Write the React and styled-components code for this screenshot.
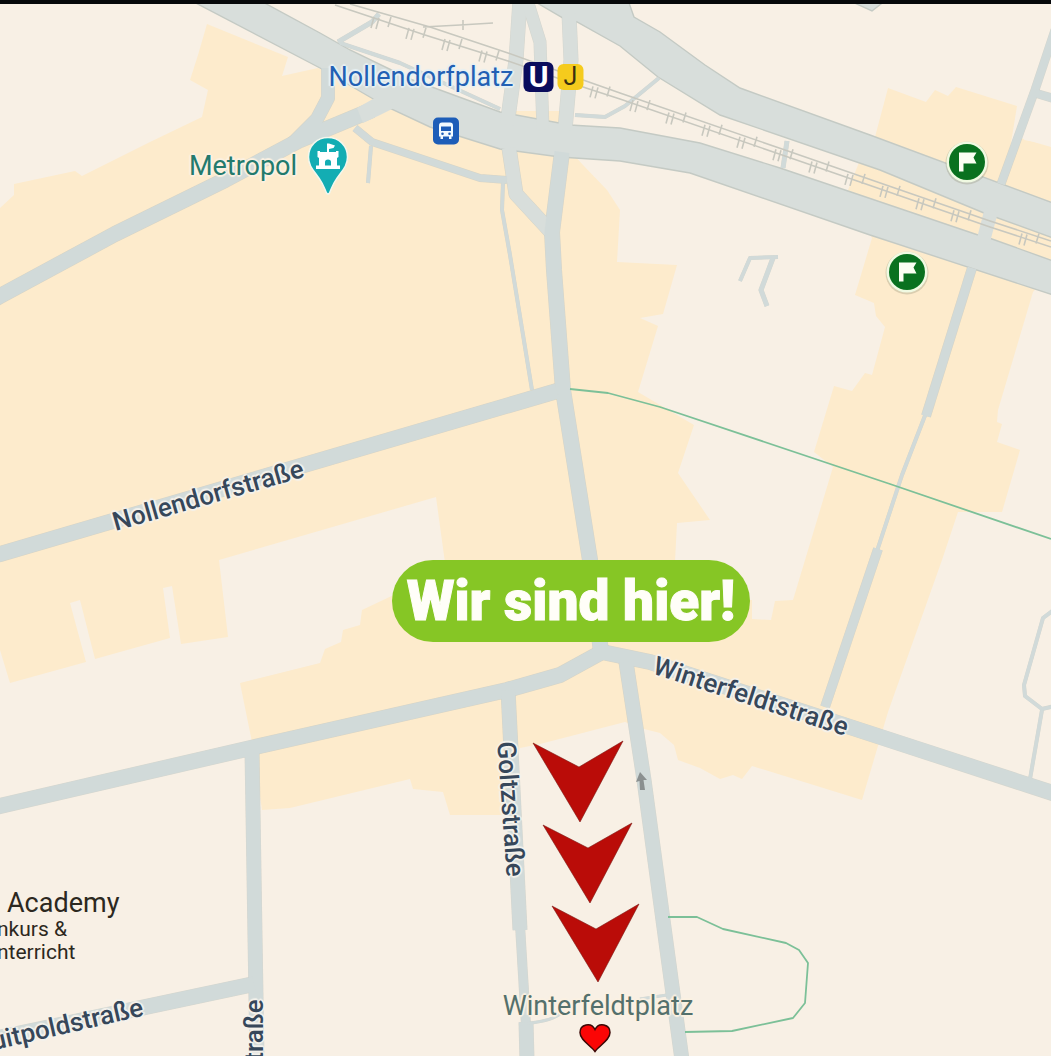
import React from "react";
import styled, { createGlobalStyle } from "styled-components";

const MAP_W = 1051;
const MAP_H = 1052;
const MAP_TOP = 4;

const color = {
  land: "#f8f0e5",
  district: "#fdebcc",
  road: "#d1dad9",
  avenue: "#d8dedb",
  casing: "#c4cac4",
  rail: "#c8c8bf",
  trail: "#7cc098",
  arrow: "#ba0c08",
  ink: "#36475a",
};

const GlobalStyle = createGlobalStyle`
  *, *::before, *::after { box-sizing: border-box; }
  body { margin: 0; background: ${color.land}; }
`;

const Page = styled.main`
  border-top: 4px solid #06080a;
  overflow: hidden;
  font-family: Roboto, "Liberation Sans", sans-serif;
`;

const MapCanvas = styled.section`
  position: relative;
  width: 100%;
  aspect-ratio: ${MAP_W} / ${MAP_H};
  overflow: hidden;
  background: ${color.land};
`;

const Drawing = styled.svg`
  display: block;
  width: 100%;
  height: 100%;
`;

/* Centres its content on a map coordinate. */
const Anchor = styled.div`
  position: absolute;
  left: ${(p) => (p.$x / MAP_W) * 100}%;
  top: ${(p) => ((p.$y - MAP_TOP) / MAP_H) * 100}%;
  transform: translate(-50%, -50%) rotate(${(p) => p.$turn || 0}deg);
  display: flex;
  align-items: center;
  gap: ${(p) => p.$gap || 0}px;
  white-space: nowrap;
`;

const halo = (c) =>
  `text-shadow: 2px 0 1px ${c}, -2px 0 1px ${c}, 0 2px 1px ${c}, 0 -2px 1px ${c}, 1px 1px 1px ${c}, -1px -1px 1px ${c};`;

const StreetName = styled.span`
  font-size: 26px;
  line-height: 28px;
  font-weight: 500;
  color: ${color.ink};
  ${halo("#f4f2ec")}
`;

const PlaceName = styled.span`
  font-size: 27px;
  line-height: 32px;
  color: ${(p) => p.$color};
  ${(p) => halo(p.$halo || "#fbf1e2")}
`;

const Badges = styled.span`
  display: flex;
  align-items: center;
  gap: 4px;
`;

const LineBadge = styled.span`
  display: flex;
  align-items: center;
  justify-content: center;
  width: ${(p) => p.$size}px;
  height: ${(p) => p.$size}px;
  border-radius: 6px;
  background: ${(p) => p.$bg};
  color: ${(p) => p.$fg};
  font-size: ${(p) => p.$font}px;
  line-height: 30px;
  font-weight: ${(p) => p.$weight};
`;

const Business = styled.div`
  position: absolute;
  left: -3px;
  top: ${((888 - MAP_TOP) / MAP_H) * 100}%;
  color: #2c2820;
  font-size: 21px;
  line-height: 23px;
`;

const BusinessName = styled.div`
  padding-left: 10px;
  font-size: 27px;
  line-height: 30px;
`;

const HerePill = styled.strong`
  display: flex;
  align-items: center;
  justify-content: center;
  width: 358px;
  height: 82px;
  border-radius: 41px;
  background: #86c625;
  color: #fffef8;
  font-size: 55px;
  line-height: 64px;
  font-weight: 900;
  -webkit-text-stroke: 1px #fffef8;
`;

const Icon = styled.svg`
  display: block;
  overflow: visible;
`;

const districts = [
  "M0 208L14 195V184L75 171L82 176L120 157L150 142L202 117L208 90L190 80L198 55L207 24L288 57L282 76L318 68L400 100L560 140L583 165L607 190L620 210L617 262L677 265L663 314L640 318L658 326L638 392L694 425L678 473L710 520L677 523L673 600H752V619L771 620L775 601L793 600L833 467L814 452L834 386L852 391L865 373L872 375L885 327L876 316L874 303L855 295L872 238L848 190L860 160L875 137L888 88L926 102L935 90L948 96L956 87L1017 106L1005 180L1020 138L1051 147V270L1033 292L998 410L997 422L1002 424L997 442L1020 450L1002 512L958 512L942 560L888 712L862 800L752 766L742 779L733 775L720 779L700 768L678 760L674 745L660 733L640 728L625 722L540 744L520 748L502 815L450 815L443 792L413 789L410 779L290 808L262 810L252 742L240 683L320 663L325 649L341 642L343 630L360 625L362 610L400 592L446 570L436 497L219 560L228 637L181 644L172 586L163 588L170 638L95 659L80 600L70 603L86 662L10 683L0 650Z",
  "M512 111H562V135H512Z",
];

const clearings = [
  "M1034 103L1051 107V145L1024 140Z",
];

const avenues = [
  "M190 0L320 68L387 107L430 127L500 149L560 157L620 161L690 173L870 235L1056 296V262L992 239L978 235L780 168L700 143L620 128L570 125L500 112L410 79L350 50L320 33L259 0Z",
  "M532 0L563 18L577 22L620 46L658 77L720 115L880 170L984 213L1056 239V204L870 135L740 88L705 65L660 32L634 17L628 0Z",
  "M848 0L872 11L886 0Z",
];

const streets = [
  { d: "M520 0L516 60L507 125", w: 15, a: 1 },
  { d: "M527 0L540 42L543 130", w: 13, a: 1 },
  { d: "M569 14L571 60L565 130", w: 15, a: 1 },
  { d: "M509 148L516 194L551 232", w: 15, a: 1 },
  { d: "M562 152L552 232L554 270L563 390L590 560L601 652", w: 16 },
  { d: "M-20 560L0 554L557 391", w: 16 },
  { d: "M-20 811L0 806L255 747L507 690L560 675L602 652L650 662L850 727L1071 799", w: 16 },
  { d: "M508 690L520 930", w: 15 },
  { d: "M520 925L526 1025", w: 10 },
  { d: "M526 1022L527 1060", w: 15 },
  { d: "M626 662L644 780L682 1060", w: 15 },
  { d: "M252 750L257 1060", w: 15 },
  { d: "M-20 1042L254 984", w: 16 },
  { d: "M-20 307L0 296L115 234L225 180L300 140L372 110", w: 16 },
  { d: "M328 68V98L317 119L292 144", w: 14 },
  { d: "M355 128L372 142L480 178L507 180", w: 8 },
  { d: "M371 146L368 183", w: 4 },
  { d: "M503 182L502 210L510 255L532 390", w: 4 },
  { d: "M1055 30L1035 90L1001 184", w: 9 },
  { d: "M1035 93L1055 99", w: 9 },
  { d: "M972 268L926 416", w: 10 },
  { d: "M926 413L902 475L877 551", w: 4 },
  { d: "M878 549L825 707", w: 10 },
  { d: "M379 14L372 22L338 42", w: 5 },
  { d: "M340 43L400 63L500 109", w: 4 },
  { d: "M575 115L605 117L625 106L659 78", w: 4 },
  { d: "M787 141L783 168", w: 5 },
  { d: "M740 281L750 258L778 257", w: 4 },
  { d: "M773 258L761 290L767 306", w: 5 },
  { d: "M1055 609L1043 618L1024 685L1025 696L1042 709L1055 706", w: 4 },
  { d: "M1042 710L1030 779", w: 4 },
  { d: "M520 1024Q550 1022 560 1014M640 999L667 995", w: 3 },
];

/* Sleepers: two short ties across the lower line and one across the upper, repeated along the track. */
const railPoint = (x) => (x < 586 ? 12 + (x - 345) * 0.31 : 88 + (x - 586) * 0.343);
const tieStarts = [374, 409, 445, 482, 593, 633, 669, 705, 740, 776, 812, 848, 883, 919, 954, 1022];

function Geography() {
  return (
    <Drawing viewBox={`0 ${MAP_TOP} ${MAP_W} ${MAP_H}`} preserveAspectRatio="none" aria-hidden="true">
      {districts.map((d) => <path key={d} d={d} fill={color.district} />)}
      {clearings.map((d) => <path key={d} d={d} fill={color.land} />)}
      <g fill="none" stroke={color.casing} strokeLinejoin="round">
        {streets.map((s) => <path key={s.d} d={s.d} strokeWidth={s.w} opacity="0.7" />)}
      </g>
      <g fill={color.avenue} stroke={color.casing} strokeWidth="1.4">
        {avenues.map((d) => <path key={d} d={d} />)}
      </g>
      <g fill="none" stroke={color.road} strokeLinejoin="round">
        {streets.map((s) => (
          <path key={s.d} d={s.d} strokeWidth={s.w > 5 ? s.w - 1 : s.w - 0.5} stroke={s.a ? color.avenue : color.road} />
        ))}
      </g>
      <g fill={color.avenue}>
        <path d="M357 108L380 95L398 106L380 115L363 123Z" />
        <path d="M985 207L998 212L989 246L976 242Z" />
      </g>
      <g fill="none" stroke={color.rail} strokeWidth="1.6">
        <path d="M335 5L425 35L508 61L586 88L620 99L785 156L990 227L1051 247" />
        <path d="M350 4L430 27L508 53L586 81L620 93L785 150L990 221L1051 241" />
        <path d="M423 27L460 25L493 23M463 20V30" />
        {tieStarts.map((x) => {
          const y = railPoint(x);
          return <path key={x} d={`M${x} ${y - 4}L${x - 3} ${y + 7}M${x + 5} ${y - 3}L${x + 2} ${y + 8}M${x + 17} ${y - 4}L${x + 14} ${y + 6}`} />;
        })}
      </g>
      <g fill="none" stroke={color.trail} strokeWidth="1.8" strokeLinejoin="round">
        <path d="M570 389L608 393L660 407L890 484L1051 539" />
        <path d="M668 917H697L723 929L786 943L799 950L808 963L805 1003L793 1018L732 1031L685 1032" />
      </g>
      <path d="M640 790L639.500 781L636 782L640 772L647 780L643.500 780L645 790Z" fill="#8b9090" />
      <g fill={color.arrow} stroke="#7b1712" strokeWidth="0.6">
        <path d="M533 743L579 767L623 741L580 822Z" />
        <path d="M543 825L588 848L632 823L590 903Z" />
        <path d="M552 906L596 929L639 904L598 982Z" />
      </g>
    </Drawing>
  );
}

function CastlePin() {
  return (
    <Icon width="42" height="60" viewBox="0 0 42 60" role="img" aria-label="Veranstaltungsort">
      <path d="M21 1.500C9.700 1.500 1.500 10 1.500 21C1.500 32 9 36 15 47Q18 53 19.500 57Q21 59 22.500 57Q24 53 27 47C33 36 40.500 32 40.500 21C40.500 10 32.300 1.500 21 1.500Z" fill="#13adb3" stroke="#f3f7ee" strokeWidth="1.500" />
      <path d="M20 7.500H22L28 9.500L26.500 12L22 13V16H20Z" fill="#fff" />
      <path fillRule="evenodd" d="M10.500 15H13V16H29V15H31.500V21L30 22V29.500H33V33H9V29.500H12V22L10.500 21ZM18 29.500H24V26Q24 23.500 21 23.500Q18 23.500 18 26Z" fill="#fff" />
    </Icon>
  );
}

function BusStop() {
  return (
    <Icon width="26" height="27" viewBox="0 0 26 27" role="img" aria-label="Bushaltestelle">
      <rect width="26" height="27" rx="5" fill="#1d5db8" />
      <path fillRule="evenodd" d="M9 5H17Q20 5 20 8V19H18.500V21.500H16V19H10V21.500H7.500V19H6V8Q6 5 9 5ZM8 9V13.500H18V9ZM9.500 15A1.300 1.300 0 1 0 9.500 17.600A1.300 1.300 0 1 0 9.500 15ZM16.500 15A1.300 1.300 0 1 0 16.500 17.600A1.300 1.300 0 1 0 16.500 15Z" fill="#f3fbff" />
    </Icon>
  );
}

function FlagMarker() {
  return (
    <Icon width="44" height="44" viewBox="0 0 44 44" role="img" aria-label="Markierter Ort">
      <circle cx="22" cy="23" r="21.500" fill="#8a8a70" opacity="0.3" />
      <circle cx="22" cy="22" r="20.500" fill="#f0fae2" />
      <circle cx="22" cy="22" r="18" fill="#09711f" />
      <path d="M14 12.500H31.500L28.500 17.500L31.500 23.500H18.500V31.500H14Z" fill="#fafff2" />
    </Icon>
  );
}

function Heart() {
  return (
    <Icon width="32" height="29" viewBox="0 0 32 29" role="img" aria-label="Herz">
      <path d="M16 28C12 22 1 17 1 9C1 1 12-2 16 6C20-2 31 1 31 9C31 17 20 22 16 28Z" fill="#fb0505" stroke="#3b0806" strokeWidth="1.500" />
    </Icon>
  );
}

export default function App() {
  return (
    <Page>
      <GlobalStyle />
      <MapCanvas aria-label="Karte Winterfeldtplatz">
        <Geography />

        <Anchor $x={456} $y={77} $gap={10}>
          <PlaceName $color="#2260b4" $halo="#e6f0f3">Nollendorfplatz</PlaceName>
          <Badges>
            <LineBadge $size={30} $bg="#0a0c5c" $fg="#ffffff" $font={30} $weight={700}>U</LineBadge>
            <LineBadge $size={26} $bg="#f5cb1d" $fg="#3a3010" $font={25} $weight={400}>J</LineBadge>
          </Badges>
        </Anchor>
        <Anchor $x={243} $y={166}>
          <PlaceName $color="#237a6d">Metropol</PlaceName>
        </Anchor>
        <Anchor $x={328} $y={166}><CastlePin /></Anchor>
        <Anchor $x={446} $y={131}><BusStop /></Anchor>
        <Anchor $x={967} $y={162}><FlagMarker /></Anchor>
        <Anchor $x={907} $y={272}><FlagMarker /></Anchor>

        <Anchor $x={208} $y={495} $turn={-16}><StreetName>Nollendorfstraße</StreetName></Anchor>
        <Anchor $x={751} $y={696} $turn={18}><StreetName>Winterfeldtstraße</StreetName></Anchor>
        <Anchor $x={511} $y={809} $turn={86}><StreetName>Goltzstraße</StreetName></Anchor>
        <Anchor $x={67} $y={1024} $turn={-13}><StreetName>uitpoldstraße</StreetName></Anchor>
        <Anchor $x={254} $y={1030} $turn={-90}><StreetName>traße</StreetName></Anchor>

        <Business>
          <BusinessName>Academy</BusinessName>
          <div>nkurs &amp;</div>
          <div>nterricht</div>
        </Business>

        <Anchor $x={571} $y={601}><HerePill>Wir sind hier!</HerePill></Anchor>
        <Anchor $x={598} $y={1006}><PlaceName $color="#54706c">Winterfeldtplatz</PlaceName></Anchor>
        <Anchor $x={595} $y={1038}><Heart /></Anchor>
      </MapCanvas>
    </Page>
  );
}
